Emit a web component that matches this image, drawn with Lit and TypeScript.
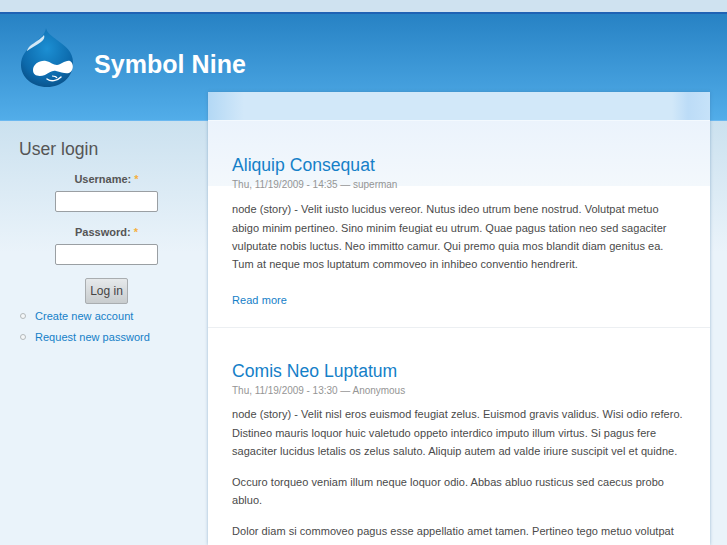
import { LitElement, html, css } from "lit";
import { customElement } from "lit/decorators.js";

@customElement("app-root")
export class AppRoot extends LitElement {
  static styles = css`
    :host { display: block; width: 727px; height: 545px; overflow: hidden; font-family: "Liberation Sans", Arial, sans-serif; font-size: 11px; color: #4a4a4a; background: #edf5fb; }
    a { color: #1580c8; text-decoration: none; }
    .top { height: 12px; background: #cfe2f0; }
    .header { height: 109px; box-sizing: border-box; border-top: 2px solid #1f62b4; border-bottom: 1px solid #6bb8f0; background: linear-gradient(#2782c4, #52ade9); display: flex; align-items: flex-start; padding: 13px 0 0 19px; gap: 19px; }
    .logo { width: 56px; height: 62px; flex: none; }
    .site { font-size: 25px; font-weight: bold; color: #fff; line-height: 28px; margin-top: 23px; letter-spacing: 0.05px; }
    .cols { display: flex; margin-top: -29px; height: 453px; background: linear-gradient(transparent 29px, #cbe1ef 29px, #eaf3fa 160px); }
    .side { width: 208px; flex: none; box-sizing: border-box; padding: 45px 0 0 19px; }
    .side h2 { margin: 0; font-size: 17.6px; font-weight: normal; color: #555; line-height: 24px; }
    .field { margin-left: -14px; text-align: center; }
    .field label { display: block; font-weight: bold; font-size: 11px; line-height: 13px; color: #555; margin-bottom: 5px; }
    .req { color: #f5b041; }
    .field .box { display: block; margin: 0 auto; box-sizing: border-box; width: 103px; height: 21px; background: #fff; border: 1px solid #9a9fa3; border-radius: 2px; }
    .u { margin-top: 12px; }
    .p { margin-top: 14px; }
    .btn { display: block; margin: 13px auto 0; box-sizing: border-box; width: 43px; height: 26px; border: 1px solid #a9adb0; border-radius: 2px; background: linear-gradient(#e6e9eb, #c8ccce); font: 12px "Liberation Sans", Arial, sans-serif; color: #444; padding: 0; }
    .links { list-style: none; margin: 1px 0 0; padding: 0; }
    .links li { display: flex; align-items: center; height: 21px; gap: 9px; font-size: 11px; letter-spacing: 0.03px; }
    .dot { width: 4px; height: 4px; margin-left: 1px; border-radius: 50%; background: #f4f7f9; border: 1px solid #b3b8ba; flex: none; }
    .main { width: 502px; flex: none; background: #fff; box-shadow: 0 0 3px rgba(60,110,160,.45); position: relative; }
    .strip { height: 28px; border-bottom: 1px solid #f3f9fe; background: linear-gradient(90deg, #b3d8f5, #d2e8f9 36px, #d2e8f9 464px, #bcdcf7 480px, #c6e2f9); }
    .fade { height: 65px; margin-bottom: -65px; background: linear-gradient(#ebf3fc, #f3f8fc); }
    .node { position: relative; padding: 0 23px 0 24px; }
    .n1 { padding-top: 33px; height: 207px; box-sizing: border-box; border-bottom: 1px solid #eceff2; }
    .n2 { padding-top: 32px; }
    h3 { margin: 0; font-size: 17.6px; font-weight: normal; line-height: 22px; color: #1580c8; }
    .meta { font-size: 10px; color: #959595; line-height: 13px; margin-top: 2px; letter-spacing: -0.02px; }
    p { margin: 0; line-height: 18.33px; font-size: 11px; letter-spacing: 0.04px; white-space: nowrap; }
    .n1 p { margin-top: 9.33px; }
    .n2 p { margin-top: 8.33px; }
    .n2 p + p { margin-top: 12.67px; }
    .more { display: block; margin-top: 17px; line-height: 18px; font-size: 11px; letter-spacing: 0.06px; }
    .rest { flex: 1; }
  `;

  render() {
    return html`
      <div class="top"></div>
      <div class="header">
        <svg class="logo" viewBox="0 0 56 62">
          <defs>
            <radialGradient id="g" cx="0.5" cy="0.35" r="0.7"><stop offset="0" stop-color="#1c8fd3"/><stop offset="0.7" stop-color="#0c69ab"/><stop offset="1" stop-color="#094f86"/></radialGradient>
          </defs>
          <path d="M27 1C26 8 20 12 14 17C7 23 2 29 2 38C2 50 13 60 28 60C43 60 54 50 54 36C54 24 46 19 38 13C33 9 28 6 27 1Z" fill="url(#g)"/>
          <path d="M25 8C22 12 16 15 11 19C9 21 8 23 8 24C12 21 18 18 22 15C25 13 26 10 25 8Z" fill="#d3e8f6"/>
          <path d="M14 43C14 37 21 33 27 34C32 35 34 38 38 38C42 38 46 33 51 34C55 36 55 44 50 46C46 47 42 45 37 44C33 43 30 46 26 48C20 50 14 49 14 43Z" fill="#fff"/>
          <path d="M28 52C32 55 38 54 42 50" fill="none" stroke="#fff" stroke-width="1.500" stroke-linecap="round"/>
          <path d="M33 49C35 49 37 49 38 51" fill="none" stroke="#fff" stroke-width="1.200"/>
        </svg>
        <div class="site">Symbol Nine</div>
      </div>
      <div class="cols">
        <aside class="side">
          <h2>User login</h2>
          <div class="field u"><label>Username: <span class="req">*</span></label><span class="box"></span></div>
          <div class="field p"><label>Password: <span class="req">*</span></label><span class="box"></span></div>
          <div class="field"><button class="btn">Log in</button></div>
          <ul class="links">
            <li><span class="dot"></span><a href="#">Create new account</a></li>
            <li><span class="dot"></span><a href="#">Request new password</a></li>
          </ul>
        </aside>
        <main class="main">
          <div class="strip"></div>
          <div class="fade"></div>
          <article class="node n1">
            <h3><a href="#">Aliquip Consequat</a></h3>
            <div class="meta">Thu, 11/19/2009 - 14:35 — superman</div>
            <p>node (story) - Velit iusto lucidus vereor. Nutus ideo utrum bene nostrud. Volutpat metuo<br>abigo minim pertineo. Sino minim feugiat eu utrum. Quae pagus tation neo sed sagaciter<br>vulputate nobis luctus. Neo immitto camur. Qui premo quia mos blandit diam genitus ea.<br>Tum at neque mos luptatum commoveo in inhibeo conventio hendrerit.</p>
            <a class="more" href="#">Read more</a>
          </article>
          <article class="node n2">
            <h3><a href="#">Comis Neo Luptatum</a></h3>
            <div class="meta">Thu, 11/19/2009 - 13:30 — Anonymous</div>
            <p>node (story) - Velit nisl eros euismod feugiat zelus. Euismod gravis validus. Wisi odio refero.<br>Distineo mauris loquor huic valetudo oppeto interdico imputo illum virtus. Si pagus fere<br>sagaciter lucidus letalis os zelus saluto. Aliquip autem ad valde iriure suscipit vel et quidne.</p>
            <p>Occuro torqueo veniam illum neque loquor odio. Abbas abluo rusticus sed caecus probo<br>abluo.</p>
            <p>Dolor diam si commoveo pagus esse appellatio amet tamen. Pertineo tego metuo volutpat</p>
          </article>
        </main>
        <div class="rest"></div>
      </div>
    `;
  }
}
